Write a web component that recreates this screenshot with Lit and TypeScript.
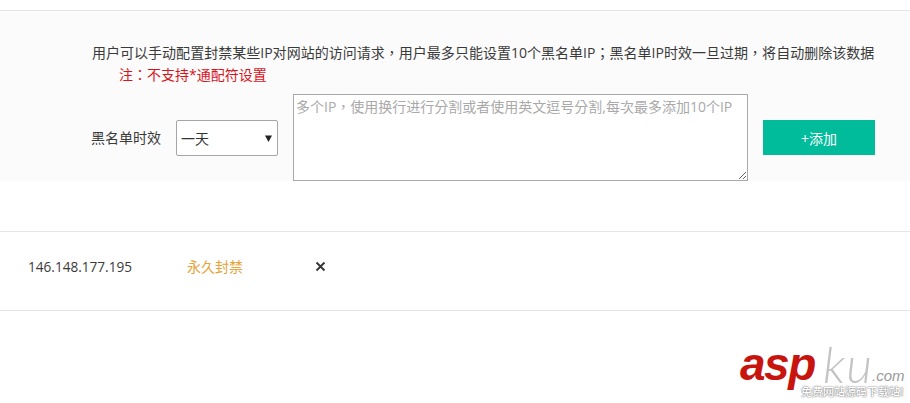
import { LitElement, html, css } from "lit";
import { customElement } from "lit/decorators.js";

const arrow = `url("data:image/svg+xml,%3Csvg xmlns='http://www.w3.org/2000/svg' width='7' height='7'%3E%3Cpath d='M0 .5h7L3.5 7z' fill='%23222'/%3E%3C/svg%3E")`;

@customElement("app-root")
export class AppRoot extends LitElement {
  static styles = css`
    :host {
      display: block;
      position: relative;
      width: 910px;
      height: 403px;
      overflow: hidden;
      background: #fff;
      font-family: "Open Sans", "Noto Sans CJK SC", sans-serif;
      font-size: 14px;
      color: #3a3a3a;
    }
    .p {
      font-family: "Noto Sans CJK TC", sans-serif;
    }
    .panel {
      margin-top: 10px;
      height: 170px;
      border-top: 1px solid #e5e5e5;
      background: #fbfbfb;
      display: flex;
      flex-direction: column;
    }
    .desc {
      margin: 31px 0 0 92px;
      line-height: 20px;
      white-space: nowrap;
      letter-spacing: 0.02px;
    }
    .note {
      margin: 1px 0 0 119px;
      line-height: 20px;
      color: #d8141c;
      white-space: nowrap;
    }
    .form {
      margin: 9px 0 0 91px;
      display: flex;
      align-items: flex-start;
    }
    .label {
      width: 85px;
      margin-top: 26px;
      line-height: 36px;
      height: 36px;
      white-space: nowrap;
    }
    .select {
      width: 102px;
      height: 36px;
      margin-top: 26px;
      box-sizing: border-box;
      border: 1px solid #a6a6a6;
      border-radius: 2px;
      padding: 0 4px;
      font: inherit;
      color: #333;
      appearance: none;
      background: #fff ${css([arrow] as unknown as TemplateStringsArray)} no-repeat 88px 14px;
    }
    textarea {
      width: 455px;
      height: 87px;
      margin: 0 15px;
      box-sizing: border-box;
      border: 1px solid #a9a9a9;
      padding: 2px;
      background: #fff;
      font: inherit;
      line-height: 20px;
      display: block;
    }
    textarea::placeholder {
      color: #a9a9a9;
      opacity: 1;
      font-family: "Open Sans", "Noto Sans CJK TC", sans-serif;
    }
    .add {
      width: 112px;
      height: 35px;
      margin-top: 26px;
      border: 0;
      padding: 0;
      background: #00bc9b;
      color: #fff;
      font: inherit;
    }
    .list {
      margin-top: 50px;
      height: 78px;
      border-top: 1px solid #e5e5e5;
      border-bottom: 1px solid #e5e5e5;
      display: flex;
      align-items: center;
      padding-left: 28px;
    }
    .row {
      display: flex;
      align-items: center;
      margin-top: -10px;
    }
    .ip {
      width: 159px;
      font-size: 13.6px;
    }
    .forever {
      width: 128px;
      color: #e6a33a;
    }
    .del {
      width: 11px;
      height: 11px;
      display: block;
    }
    .mark {
      position: absolute;
      left: 740px;
      top: 345px;
      width: 170px;
      height: 58px;
    }
    .asp {
      position: absolute;
      left: 0;
      top: 4px;
      font: italic 700 46px/30px "Liberation Sans", sans-serif;
      color: #c8140f;
      letter-spacing: -1.5px;
    }
    .ku {
      position: absolute;
      left: 83px;
      top: 2px;
      font: italic 300 50px/34px "Lato", sans-serif;
      color: #c4c4c4;
      letter-spacing: 1px;
    }
    .com {
      position: absolute;
      left: 132px;
      top: 24px;
      font: italic 400 15px/14px "Liberation Sans", sans-serif;
      color: #9a9a9a;
    }
    .sub {
      position: absolute;
      left: 61px;
      top: 39px;
      font: 500 11px/14px "Noto Sans CJK SC", sans-serif;
      color: #fff;
      white-space: nowrap;
      text-shadow: 0 0 2px #777, 0 0 1px #777;
    }
  `;

  render() {
    return html`
      <div class="panel">
        <div class="desc">用户可以手动配置封禁某些IP对网站的访问请求<span class="p">，</span>用户最多只能设置10个黑名单IP<span class="p">；</span>黑名单IP时效一旦过期<span class="p">，</span>将自动删除该数据</div>
        <div class="note">注<span class="p">：</span>不支持*通配符设置</div>
        <div class="form">
          <div class="label">黑名单时效</div>
          <select class="select">
            <option>一天</option>
          </select>
          <textarea placeholder="多个IP，使用换行进行分割或者使用英文逗号分割,每次最多添加10个IP"></textarea>
          <button class="add">+添加</button>
        </div>
      </div>
      <div class="list">
        <div class="row">
          <div class="ip">146.148.177.195</div>
          <div class="forever">永久封禁</div>
          <svg class="del" viewBox="0 0 11 11" aria-label="删除">
            <path d="M1.5 1.5 L9.5 9.5 M9.5 1.5 L1.5 9.5" stroke="#333" stroke-width="1.8" fill="none" />
          </svg>
        </div>
      </div>
      <div class="mark">
        <span class="asp">asp</span>
        <span class="ku">ku</span>
        <span class="com">.com</span>
        <span class="sub">免费网站源码下载站!</span>
      </div>
    `;
  }
}
